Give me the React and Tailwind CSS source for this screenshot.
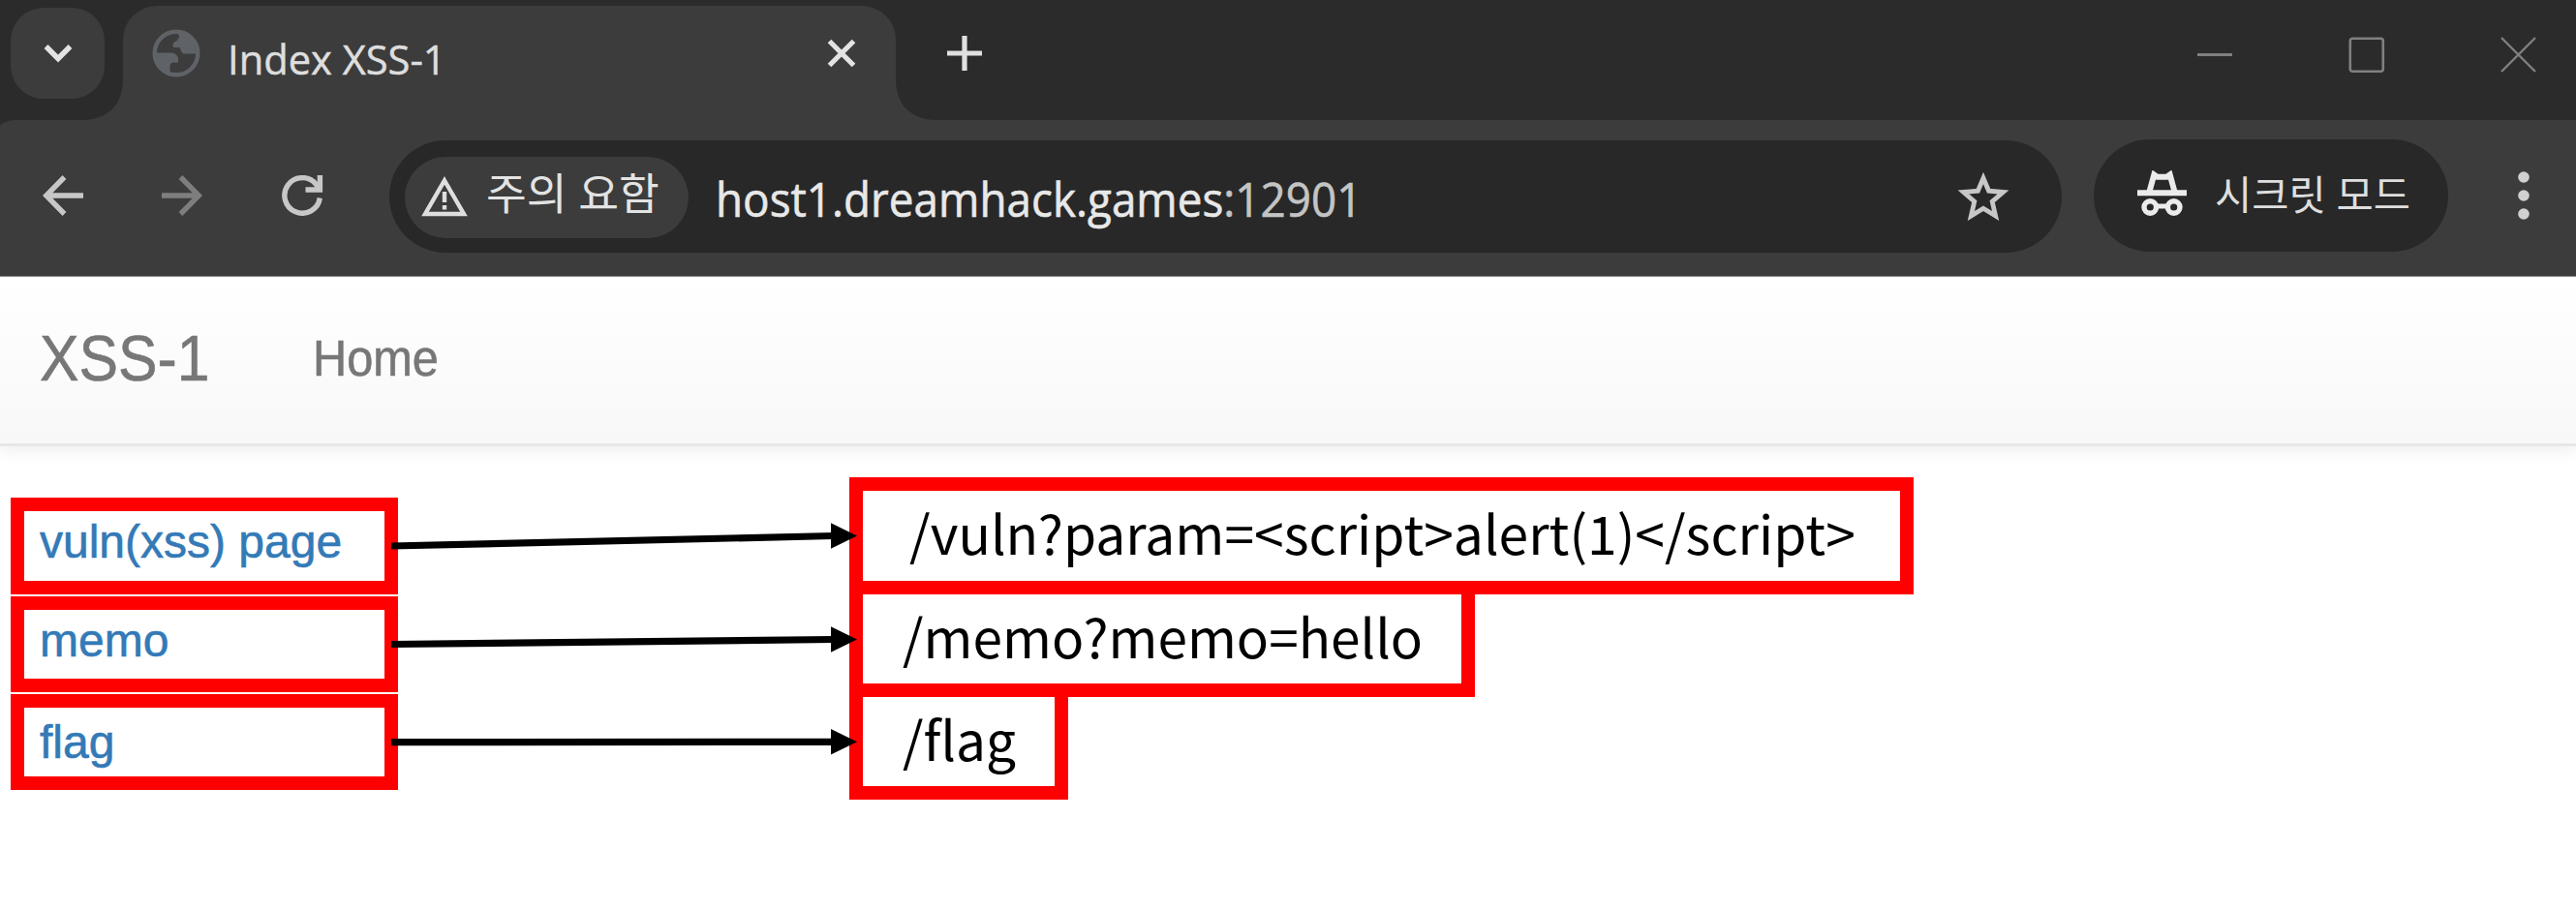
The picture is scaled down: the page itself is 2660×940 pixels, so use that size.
import React from "react";

const LINKS = [
  { label: "vuln(xss) page", box: "h-[100px] pb-2" },
  { label: "memo", box: "h-[99px] pb-[7px]" },
  { label: "flag", box: "h-[99px]" },
];

const PATHS = [
  { text: "/vuln?param=<script>alert(1)</script>", box: "h-[121px] w-[1099px] pl-[48px] text-[55.2px]" },
  { text: "/memo?memo=hello", box: "-mt-[14px] h-[120px] w-[646px] pl-[41px] text-[55px]" },
  { text: "/flag", box: "-mt-[14px] h-[120px] w-[226px] pl-[41px] text-[55px]" },
];

// Start and tip heights of each arrow, measured from the top of the arrow column.
const ARROWS = [
  { from: 71, to: 60.5 },
  { from: 172.5, to: 167.5 },
  { from: 273.7, to: 273.3 },
];

function TabStrip() {
  return (
    <div className="flex h-[124px] items-start bg-[#2b2b2b]">
      <button className="mt-2 ml-[11px] flex h-[94px] w-[97px] items-center justify-center rounded-[34px] bg-[#3c3c3c]">
        <svg className="h-[22px] w-[32px]" viewBox="0 0 32 22" fill="none" stroke="#e3e3e3" strokeWidth="5.5">
          <path d="M3.5 4 L16 16.5 L28.5 4" />
        </svg>
      </button>
      <div className="relative mt-[6px] ml-[19px] flex h-[118px] w-[798px] items-start rounded-t-[35px] bg-[#3c3c3c]">
        <svg className="absolute bottom-0 -left-[42px] h-[42px] w-[42px]" viewBox="0 0 42 42">
          <path d="M42 0 V42 H0 C26 42 42 26 42 0 Z" fill="#3c3c3c" />
        </svg>
        <svg className="absolute -right-[42px] bottom-0 h-[42px] w-[42px]" viewBox="0 0 42 42">
          <path d="M0 0 V42 H42 C16 42 0 26 0 0 Z" fill="#3c3c3c" />
        </svg>
        <svg className="mt-[24px] ml-[30px] h-[50px] w-[50px] shrink-0" viewBox="0 0 50 50">
          <circle cx="25" cy="25" r="22.3" fill="none" stroke="#5f6368" strokeWidth="4.4" />
          <path
            d="M27 5.5 L28.5 8 C26 10 27.5 11.5 24 13 C20.5 14.5 21.5 17.5 22.5 19 H27.5 C30 19.5 29.5 24 32.5 25.5 H45 C46 14 38 4 27 2.5 Z"
            fill="#5f6368"
          />
          <path
            d="M5 24.5 H20 C24 24.5 27 28 27 31 V34.5 H22.5 C18.5 34.5 18.5 38.5 18.5 40 V45 C10 42 4 34 5 24.5 Z"
            fill="#5f6368"
          />
        </svg>
        <span className="mt-[25px] ml-[28px] origin-left scale-x-[0.98] text-[42.5px] leading-[60px] whitespace-nowrap text-[#dedede] [-webkit-text-stroke:0.5px_#dedede]">
          Index XSS-1
        </span>
        <svg className="mt-[34px] mr-[41px] ml-auto h-[30px] w-[30px]" viewBox="0 0 30 30" stroke="#e3e3e3" strokeWidth="5.2">
          <path d="M2.5 2.5 L27.5 27.5 M27.5 2.5 L2.5 27.5" />
        </svg>
      </div>
      <svg className="mt-[37px] ml-[53px] h-[36px] w-[36px]" viewBox="0 0 36 36" stroke="#e0e0e0" strokeWidth="5.2">
        <path d="M18 0 V36 M0 18 H36" />
      </svg>
      <div className="mt-[38px] mr-[40px] ml-auto flex gap-[119px] text-[#808080]">
        <svg className="h-[38px] w-[38px]" viewBox="0 0 38 38" stroke="currentColor" strokeWidth="3">
          <path d="M1 18.5 H37" />
        </svg>
        <svg className="h-[38px] w-[38px]" viewBox="0 0 38 38" fill="none" stroke="currentColor" strokeWidth="2.6">
          <rect x="1.8" y="1.8" width="34" height="34" rx="2.5" />
        </svg>
        <svg className="h-[38px] w-[38px]" viewBox="0 0 38 38" stroke="currentColor" strokeWidth="2.4">
          <path d="M1 1 L36 36 M36 1 L1 36" />
        </svg>
      </div>
    </div>
  );
}

function Toolbar() {
  return (
    <div className="relative flex h-[162px] items-start border-b border-[#8a8a8a] bg-[#3c3c3c]">
      <svg className="absolute top-0 left-0 h-[6px] w-[18px]" viewBox="0 0 18 6">
        <path d="M0 0 H18 C10 0 4 2 0 5.5 Z" fill="#2b2b2b" />
      </svg>
      <svg className="mt-[57px] ml-[44px] h-[42px] w-[42px]" viewBox="0 0 42 42" fill="none" stroke="#c7c7c7" strokeWidth="5.4">
        <path d="M42 21 H4 M22.5 2 L3.7 21 L22.5 40" />
      </svg>
      <svg className="mt-[57px] ml-[81px] h-[42px] w-[42px]" viewBox="0 0 42 42" fill="none" stroke="#7e7e7e" strokeWidth="5.4">
        <path d="M0 21 H38 M19.5 2 L38.3 21 L19.5 40" />
      </svg>
      <svg className="mt-[57px] ml-[82px] h-[42px] w-[43px]" viewBox="0 0 43 42" fill="none" stroke="#c7c7c7" strokeWidth="5.4">
        <path d="M39.3 23.5 A18.3 18.3 0 1 1 35.5 9.5 L39 14.5" />
        <path d="M39.4 0 V15 H24.5" />
      </svg>
      <div className="mt-[21px] ml-[68px] flex h-[116px] w-[1727px] items-start rounded-full bg-[#282828]">
        <div className="mt-[17px] ml-[16px] flex h-[84px] w-[293px] items-start rounded-full bg-[#3c3c3c]">
          <svg className="mt-[20px] ml-[16px] h-[42px] w-[50px]" viewBox="0 0 50 42" fill="none" stroke="#dedede">
            <path d="M25 4.5 L45 39 H5 Z" strokeWidth="4.4" />
            <path d="M25 16 V27 M25 30 V34.5" strokeWidth="4.4" />
          </svg>
          <span className="mt-[3px] ml-[18px] text-[45.4px] leading-[68px] whitespace-nowrap text-[#e3e3e3]">주의 요함</span>
        </div>
        <span className="mt-[26px] ml-[28px] origin-left scale-x-[0.935] text-[49px] leading-[68px] whitespace-nowrap text-[#e8e8e8] [-webkit-text-stroke:0.6px]">
          host1.dreamhack.games<span className="text-[#c4c4c4]">:12901</span>
        </span>
        <svg className="mt-[32px] mr-[54px] ml-auto h-[54px] w-[54px]" viewBox="0 0 54 54" fill="none" stroke="#c7c7c7" strokeWidth="4.8">
          <path d="M27 7 L32.6 20.2 L47.5 21.5 L36.2 31.2 L39.6 46 L27 38.2 L14.4 46 L17.8 31.2 L6.5 21.5 L21.4 20.2 Z" />
        </svg>
      </div>
      <div className="mt-[20px] ml-[33px] flex h-[116px] w-[366px] items-start rounded-full bg-[#282828]">
        <svg className="mt-[32px] ml-[45px] h-[48px] w-[51px]" viewBox="0 0 51 48" fill="none" stroke="#ebebeb">
          <path d="M0 23.3 H51" strokeWidth="6" />
          <path d="M12.5 22 L17.3 4.5 L20.5 6.8 H30.5 L33.7 4.5 L38.5 22" strokeWidth="6" />
          <circle cx="13.3" cy="38" r="6.3" strokeWidth="5.4" />
          <circle cx="37.7" cy="38" r="6.3" strokeWidth="5.4" />
          <path d="M19 37 H32" strokeWidth="5" />
        </svg>
        <span className="mt-[27px] ml-[29px] text-[41.6px] leading-[60px] whitespace-nowrap text-[#dedede]">시크릿 모드</span>
      </div>
      <svg className="mt-[52px] ml-[72px] h-[52px] w-[12px]" viewBox="0 0 12 52" fill="#d0d0d0">
        <circle cx="6" cy="7" r="5.8" />
        <circle cx="6" cy="26" r="5.8" />
        <circle cx="6" cy="45" r="5.8" />
      </svg>
    </div>
  );
}

function Navbar() {
  return (
    <nav className="flex h-[175px] items-start border-b-[3px] border-[#e7e7e7] bg-linear-to-b from-white to-[#f8f8f8] font-['Liberation_Sans',Arial,sans-serif] text-[#777777] shadow-[0_4px_16px_rgba(0,0,0,0.075)] [-webkit-text-stroke:0.6px]">
      <a className="mt-[46px] ml-[41px] w-[282px] origin-left scale-x-[0.92] text-[66px] leading-[76px]">XSS-1</a>
      <a className="mt-[55px] origin-left scale-x-[0.955] text-[51px] leading-[60px]">Home</a>
    </nav>
  );
}

export default function App() {
  return (
    <div className="h-[940px] w-[2660px] overflow-hidden bg-white font-['Open_Sans','Noto_Sans_CJK_KR',sans-serif]">
      <TabStrip />
      <Toolbar />
      <Navbar />
      <main className="flex items-start pl-[11px]">
        <ul className="mt-[53px] flex w-[400px] flex-col gap-[2px] font-['Liberation_Sans',Arial,sans-serif] [-webkit-text-stroke:0.6px]">
          {LINKS.map(({ label, box }) => (
            <li key={label} className={`flex items-center border-[14px] border-[#ff0000] pl-4 text-[48px] leading-none text-[#337ab7] ${box}`}>
              {label}
            </li>
          ))}
        </ul>
        <svg className="z-10 mt-[32px] h-[333px] w-[466px] overflow-visible" viewBox="0 0 466 333">
          {ARROWS.map(({ from, to }) => (
            <g key={from}>
              <path d={`M-7 ${from} L450 ${to}`} stroke="#000000" strokeWidth="7.2" />
              <path d={`M447 ${to - 13.3} L474 ${to} L447 ${to + 13.3} Z`} fill="#000000" />
            </g>
          ))}
        </svg>
        <ul className="mt-[32px] flex flex-col font-['Noto_Sans_CJK_KR',sans-serif]">
          {PATHS.map(({ text, box }) => (
            <li key={text} className={`flex items-center border-[14px] border-[#ff0000] pb-2 leading-none whitespace-nowrap text-black ${box}`}>
              {text}
            </li>
          ))}
        </ul>
      </main>
    </div>
  );
}
